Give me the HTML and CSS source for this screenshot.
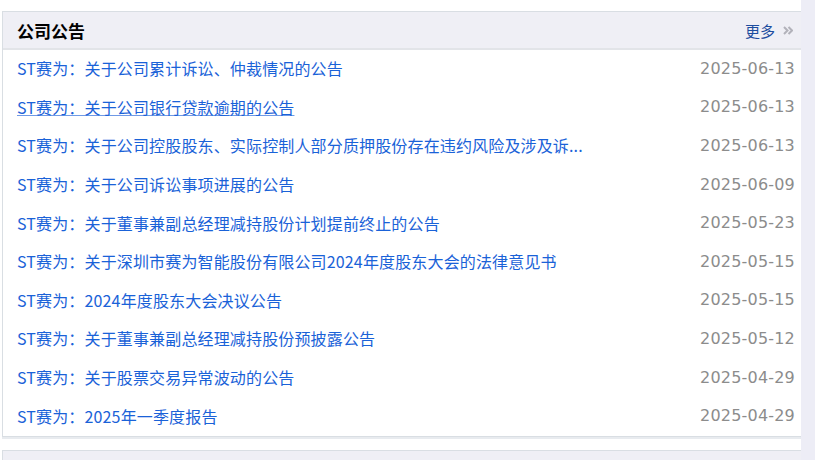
FILE: index.html
```html
<!DOCTYPE html>
<html lang="zh-CN">
<head>
  <meta charset="UTF-8">
  <meta name="viewport" content="width=device-width, initial-scale=1.0">
  <title>公司公告</title>
  <link rel="stylesheet" href="styles.css">
</head>
<body>
  <div class="page">
    <div class="main">
      <div class="panel">
        <div class="panel-head">
          <h2 class="panel-title">公司公告</h2>
          <a class="more" href="#">更多</a>
          <svg class="more-arrow" width="10" height="9" viewBox="0 0 10 9">
            <path d="M1 1 L4.5 4.5 L1 8 M5.5 1 L9 4.5 L5.5 8" fill="none" stroke="#b2b2ba" stroke-width="2"/>
          </svg>
        </div>
        <ul class="notice-list">
          <li class="notice"><a class="notice-title" href="#">ST赛为：关于公司累计诉讼、仲裁情况的公告</a><span class="notice-date">2025-06-13</span></li>
          <li class="notice"><a class="notice-title hover" href="#">ST赛为：关于公司银行贷款逾期的公告</a><span class="notice-date">2025-06-13</span></li>
          <li class="notice"><a class="notice-title" href="#">ST赛为：关于公司控股股东、实际控制人部分质押股份存在违约风险及涉及诉...</a><span class="notice-date">2025-06-13</span></li>
          <li class="notice"><a class="notice-title" href="#">ST赛为：关于公司诉讼事项进展的公告</a><span class="notice-date">2025-06-09</span></li>
          <li class="notice"><a class="notice-title" href="#">ST赛为：关于董事兼副总经理减持股份计划提前终止的公告</a><span class="notice-date">2025-05-23</span></li>
          <li class="notice"><a class="notice-title" href="#">ST赛为：关于深圳市赛为智能股份有限公司2024年度股东大会的法律意见书</a><span class="notice-date">2025-05-15</span></li>
          <li class="notice"><a class="notice-title" href="#">ST赛为：2024年度股东大会决议公告</a><span class="notice-date">2025-05-15</span></li>
          <li class="notice"><a class="notice-title" href="#">ST赛为：关于董事兼副总经理减持股份预披露公告</a><span class="notice-date">2025-05-12</span></li>
          <li class="notice"><a class="notice-title" href="#">ST赛为：关于股票交易异常波动的公告</a><span class="notice-date">2025-04-29</span></li>
          <li class="notice"><a class="notice-title" href="#">ST赛为：2025年一季度报告</a><span class="notice-date">2025-04-29</span></li>
        </ul>
      </div>
      <div class="panel next">
        <div class="panel-head"></div>
      </div>
    </div>
    <div class="side"></div>
  </div>
</body>
</html>
```

FILE: styles.css
```css
body {
  margin: 0;
  font-family: "Noto Sans CJK SC", sans-serif;
  background: #fff;
}

.page {
  display: flex;
  height: 460px;
  overflow: hidden;
}

.main {
  width: 799px;
  padding: 11px 0 0 2px;
}

.side {
  flex: 1;
  background: #ededf6;
}

.panel {
  border: 1px solid #d9dee3;
  border-right: none;
  box-shadow: 0 2px 0 #e8ebef;
  background: #fff;
}

.panel.next {
  margin-top: 13px;
}

.panel-head {
  display: flex;
  align-items: center;
  height: 36px;
  padding: 0 8px 0 14px;
  background: #efeff5;
  border-bottom: 2px solid #e2e4e8;
}

.panel-title {
  flex: 1;
  margin: 0;
  font-size: 17px;
  font-weight: bold;
  color: #000;
}

.more {
  font-size: 15px;
  color: #1d4d9f;
  text-decoration: none;
}

.more-arrow {
  margin-left: 8px;
}

.notice-list {
  list-style: none;
  margin: 0;
  padding: 0;
}

.notice {
  display: flex;
  align-items: center;
  height: 38.6px;
  box-sizing: border-box;
  padding: 0 6px 2px 14px;
}

.notice-title {
  flex: 1;
  font-size: 16px;
  letter-spacing: 0.15px;
  color: #1a62d8;
  text-decoration: none;
  white-space: nowrap;
}

.notice-title.hover {
  text-decoration: underline;
  text-decoration-color: #6f9ae6;
}

.notice-date {
  font-family: "DejaVu Sans", sans-serif;
  font-size: 16px;
  letter-spacing: 0.2px;
  color: #8c8c8c;
}
```
